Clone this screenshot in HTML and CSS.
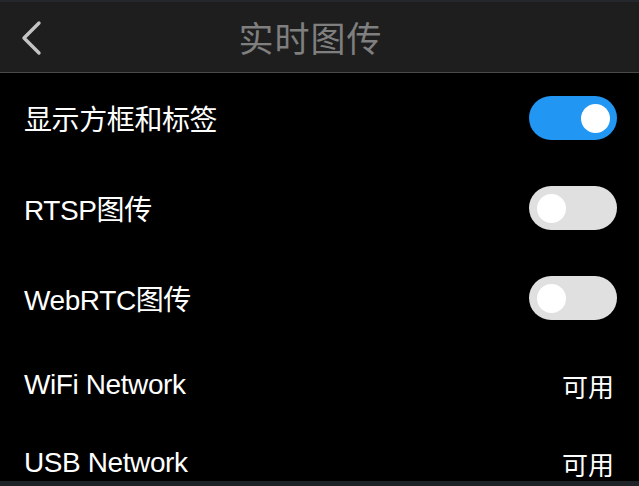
FILE: index.html
```html
<!DOCTYPE html>
<html lang="zh-CN">
<head>
<meta charset="utf-8">
<title>实时图传</title>
<link rel="stylesheet" href="styles.css">
</head>
<body>
<div class="app">
  <header class="topbar">
    <button class="back" aria-label="返回">
      <svg width="24" height="36" viewBox="0 0 24 36"><path d="M20 3 L5 18 L20 33" fill="none" stroke="#c4c4c4" stroke-width="3.4" stroke-linecap="round" stroke-linejoin="round"/></svg>
    </button>
    <h1 class="title">实时图传</h1>
  </header>
  <ul class="list">
    <li class="row tall"><span class="label">显示方框和标签</span><span class="switch on"><span class="knob"></span></span></li>
    <li class="row tall"><span class="label">RTSP图传</span><span class="switch"><span class="knob"></span></span></li>
    <li class="row tall"><span class="label">WebRTC图传</span><span class="switch"><span class="knob"></span></span></li>
    <li class="row short"><span class="label">WiFi Network</span><span class="value">可用</span></li>
    <li class="row short"><span class="label">USB Network</span><span class="value">可用</span></li>
  </ul>
  <div class="navbar"></div>
</div>
</body>
</html>
```
FILE: styles.css
```css
* { box-sizing: border-box; }
html, body {
  margin: 0;
  padding: 0;
  background: #000;
  height: 100%;
  overflow: hidden;
}
body {
  font-family: "Liberation Sans", "Noto Sans CJK SC", sans-serif;
  color: #fff;
}
.app {
  width: 639px;
  height: 486px;
  display: flex;
  flex-direction: column;
}
.topbar {
  height: 73px;
  flex: none;
  background: #1e1e1e;
  border-top: 2px solid #24272c;
  border-bottom: 1px solid #4a4a4a;
  display: flex;
  align-items: center;
  justify-content: center;
  position: relative;
}
.back {
  position: absolute;
  left: 19px;
  top: 18px;
  width: 26px;
  height: 36px;
  padding: 0;
  border: 0;
  background: none;
  display: flex;
  align-items: center;
}
.title {
  margin: 0 18px 0 0;
  font-family: "Noto Sans CJK SC", sans-serif;
  font-weight: 400;
  font-size: 35px;
  color: #7f7f7f;
  line-height: 1;
  letter-spacing: 1px;
  padding-bottom: 2px;
}
.list {
  list-style: none;
  margin: 0;
  padding: 0 22px 0 24px;
}
.row {
  display: flex;
  align-items: center;
  justify-content: space-between;
  font-size: 28px;
}
.row.tall { height: 90px; }
.row.short { height: 78px; padding-top: 6px; }
.label {
  font-family: "Liberation Sans", "Noto Sans CJK SC", sans-serif;
  letter-spacing: -0.4px;
}
.value {
  font-family: "Noto Sans CJK SC", sans-serif;
  font-size: 26px;
  padding-right: 3px;
}
.switch {
  width: 88px;
  height: 44px;
  border-radius: 22px;
  background: #e0e0e0;
  display: flex;
  align-items: center;
  padding: 0 8px;
}
.switch.on {
  background: #2196f3;
  justify-content: flex-end;
  padding: 0 7px;
}
.knob {
  width: 29px;
  height: 29px;
  border-radius: 50%;
  background: #fff;
}
.navbar {
  position: fixed;
  left: 0;
  right: 0;
  bottom: 0;
  height: 5px;
  background: #1f2328;
}
```
